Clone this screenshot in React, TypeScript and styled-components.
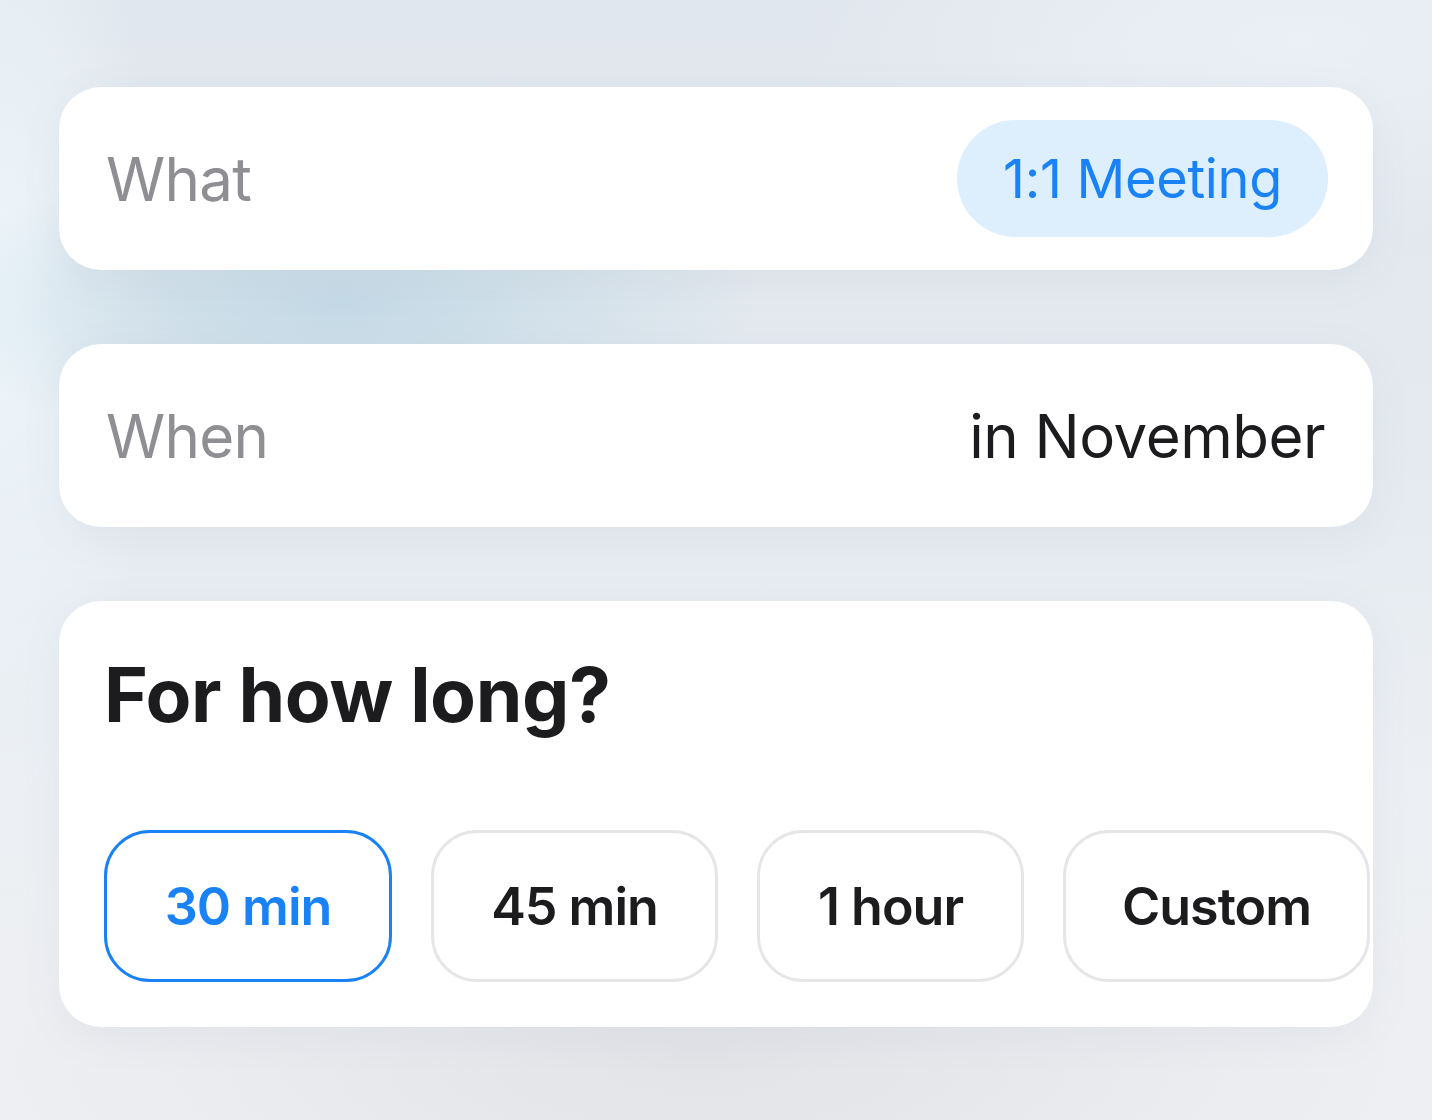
import React from 'react';
import styled, { createGlobalStyle } from 'styled-components';

const Global = createGlobalStyle`
html, body {
  margin: 0;
  padding: 0;
}
body {
  font-family: Inter, "Noto Sans", sans-serif;
}
`

const Page = styled.div`
width: 1432px;
height: 1120px;
box-sizing: border-box;
padding: 87px 59px 0 59px;
display: flex;
flex-direction: column;
gap: 74px;
overflow: hidden;
background:
  radial-gradient(ellipse 420px 150px at 340px 305px, rgba(190, 215, 228, 0.85), rgba(190, 215, 228, 0) 100%),
  radial-gradient(ellipse 160px 520px at 0px 300px, rgba(238, 246, 251, 0.95), rgba(238, 246, 251, 0) 100%),
  radial-gradient(ellipse 500px 200px at 1300px 40px, rgba(236, 241, 247, 0.9), rgba(236, 241, 247, 0) 100%),
  radial-gradient(ellipse 700px 220px at 700px 1060px, rgba(225, 226, 230, 0.9), rgba(225, 226, 230, 0) 100%),
  linear-gradient(180deg, #e1e7ee 0%, #e4eaf0 40%, #eceff3 70%, #eeeff2 100%);
`

const Card = styled.div<{ $tall?: boolean }>`
background: #ffffff;
border-radius: 42px;
box-sizing: border-box;
height: ${p => (p.$tall ? '426px' : '183px')};
padding: ${p => (p.$tall ? '52px 0 0 45px' : '0 48px 0 47px')};
display: flex;
flex-direction: ${p => (p.$tall ? 'column' : 'row')};
align-items: ${p => (p.$tall ? 'flex-start' : 'center')};
justify-content: ${p => (p.$tall ? 'flex-start' : 'space-between')};
box-shadow: 0 10px 40px rgba(120, 130, 150, 0.08);
`

const Label = styled.span`
font-size: 60px;
color: #8e8e93;
letter-spacing: -0.7px;
`

const Value = styled.span`
font-size: 60px;
color: #1c1c1e;
letter-spacing: -0.5px;
`

const Pill = styled.span`
display: inline-flex;
align-items: center;
height: 117px;
padding: 0 46px;
margin-right: -3px;
border-radius: 60px;
background: #ddeefd;
color: #1a82f7;
font-size: 54px;
letter-spacing: -0.3px;
`

const Title = styled.h2`
margin: 0;
font-size: 75px;
font-weight: 700;
color: #1c1c1e;
letter-spacing: -0.4px;
line-height: 84px;
`

const Options = styled.div`
display: flex;
gap: 39px;
margin-top: 93px;
`

const Option = styled.button<{ $active?: boolean; $w: number }>`
width: ${p => p.$w}px;
height: 152px;
box-sizing: border-box;
border-radius: 46px;
background: #ffffff;
border: ${p => (p.$active ? '3px solid #1a82f7' : '3px solid #e6e6e8')};
color: ${p => (p.$active ? '#1a82f7' : '#1c1c1e')};
font-family: Inter, "Noto Sans", sans-serif;
font-size: 52px;
font-weight: 600;
letter-spacing: -1px;
padding: 0;
display: flex;
align-items: center;
justify-content: center;
flex-shrink: 0;
`

const options = [
  { label: '30 min', w: 288, active: true },
  { label: '45 min', w: 287 },
  { label: '1 hour', w: 267 },
  { label: 'Custom', w: 307 },
]

function App() {
  return (
    <Page>
      <Global />
      <Card>
        <Label>What</Label>
        <Pill>1:1 Meeting</Pill>
      </Card>
      <Card>
        <Label>When</Label>
        <Value>in November</Value>
      </Card>
      <Card $tall>
        <Title>For how long?</Title>
        <Options>
          {options.map(o => (
            <Option key={o.label} $active={o.active} $w={o.w}>{o.label}</Option>
          ))}
        </Options>
      </Card>
    </Page>
  );
}

export default App;
